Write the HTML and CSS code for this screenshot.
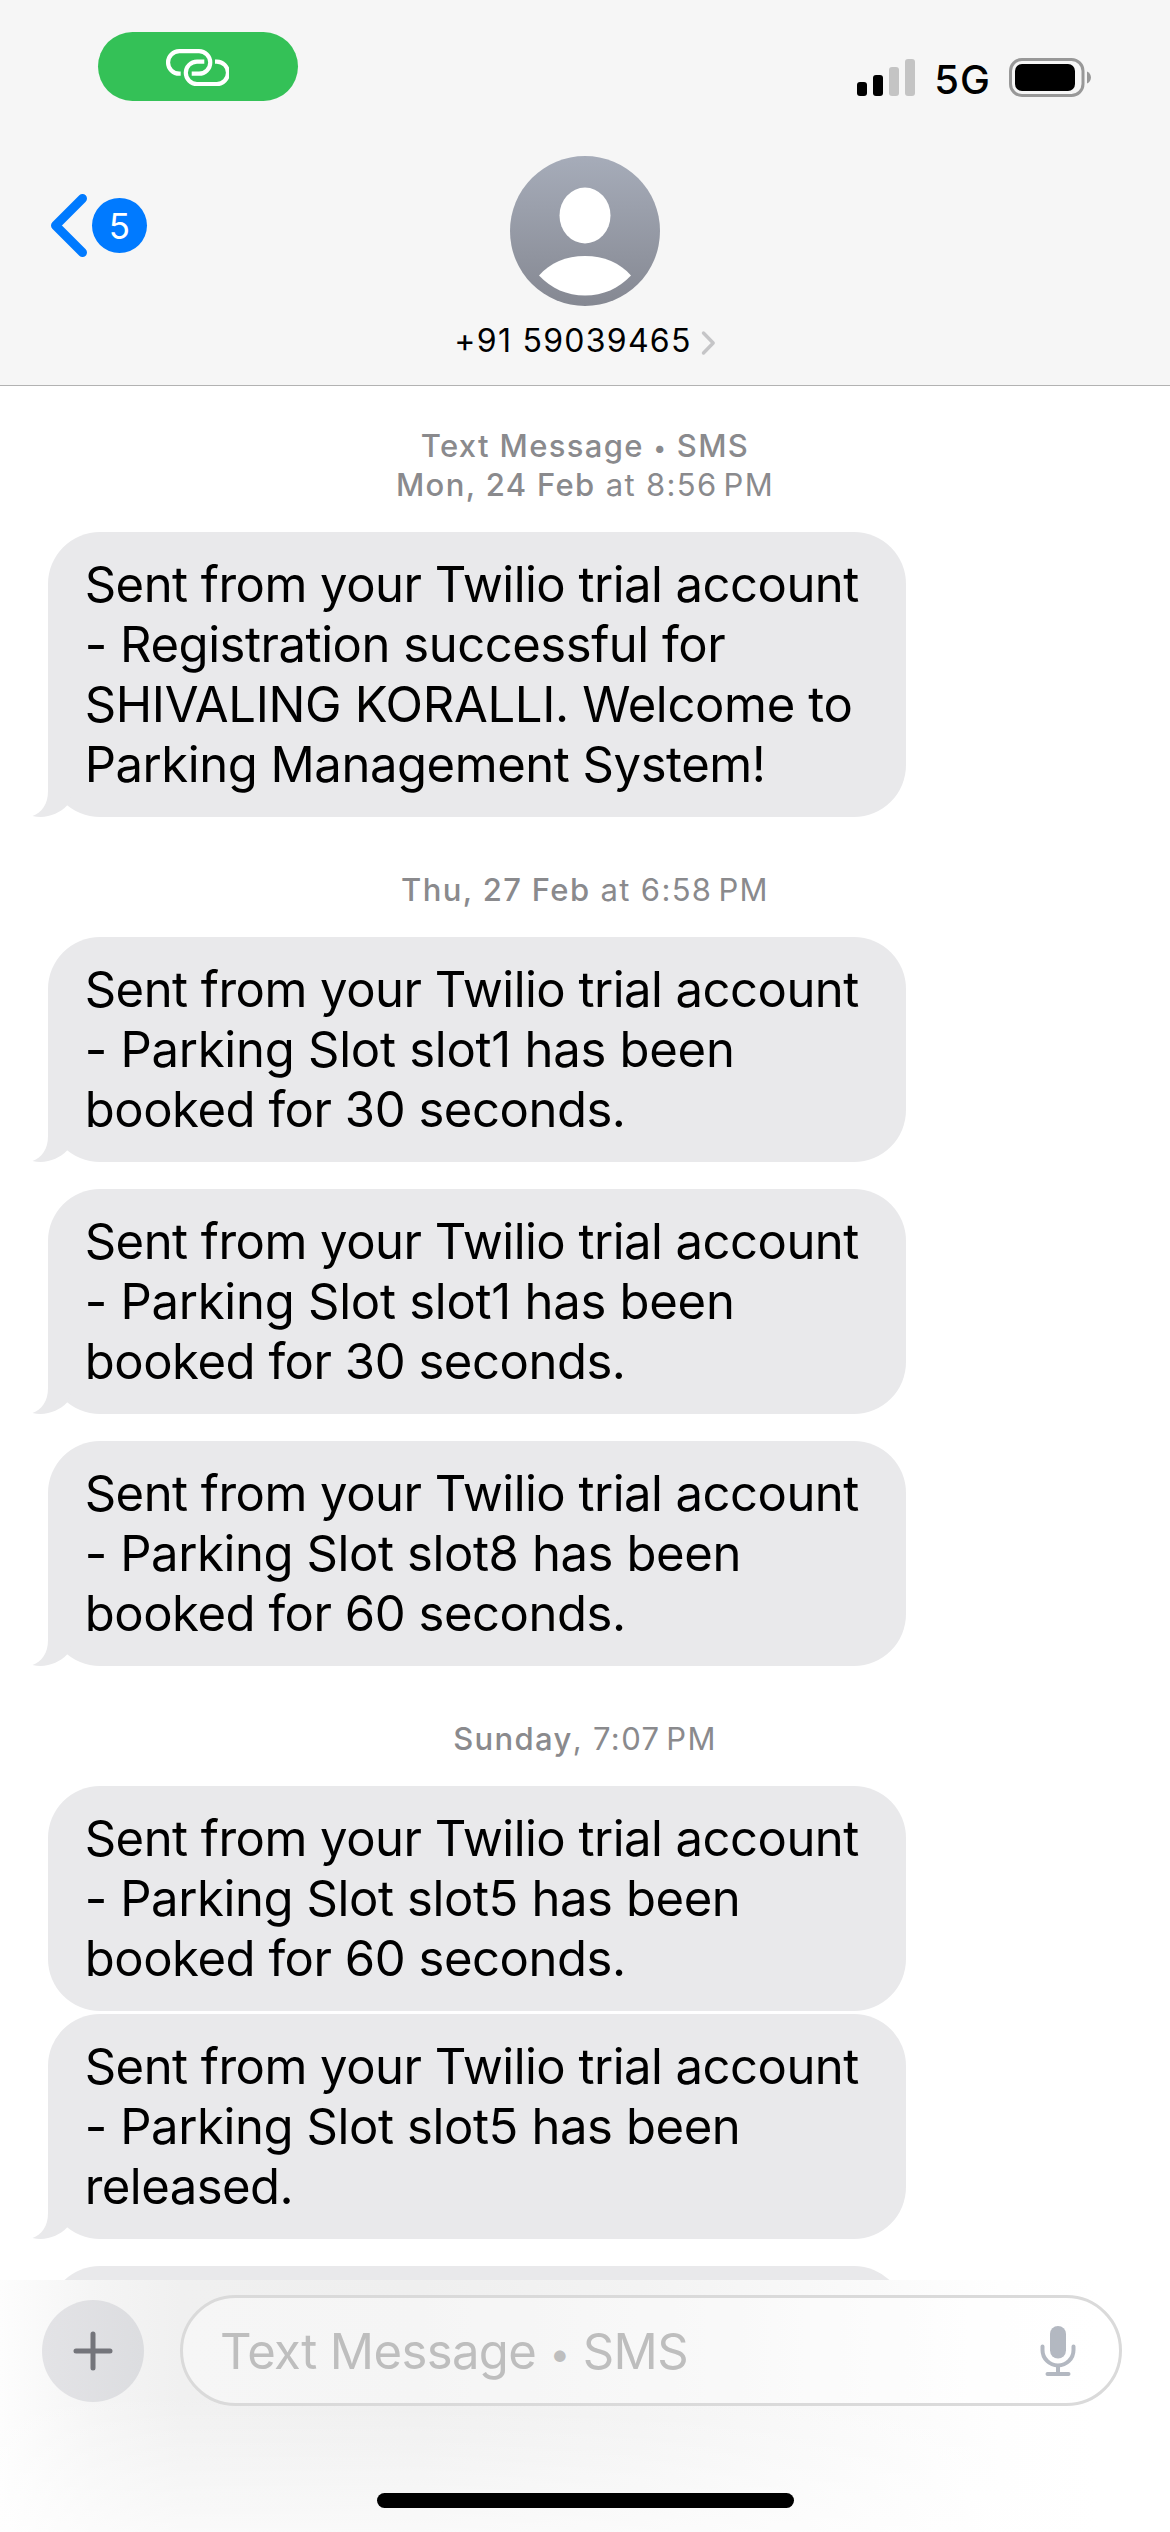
FILE: index.html
```html
<!DOCTYPE html>
<html lang="en">
<head>
<meta charset="utf-8">
<title>Messages</title>
<link rel="stylesheet" href="styles.css">
</head>
<body>
<div class="phone">
  <header class="header">
    <div class="status">
      <div class="pill">
        <svg width="64" height="40" viewBox="165 48 64 40" fill="none" stroke="#fff" stroke-width="4.2">
          <path d="M180.7 73.7H179.3A11.25 11.25 0 0 1 179.3 51.2H199A11.25 11.25 0 0 1 199 73.7H191.7"/>
          <path d="M204.3 61.6H197A11.2 11.2 0 0 0 197 84H216.8A11.2 11.2 0 0 0 216.8 61.6H215"/>
        </svg>
      </div>
      <div class="indicators">
        <svg class="signal" width="58" height="38" viewBox="0 0 58 38">
          <rect x="0" y="24" width="10" height="14" rx="3"/>
          <rect x="16" y="17" width="10" height="21" rx="3"/>
          <rect x="32" y="9" width="10" height="29" rx="3" fill="#c4c4c4"/>
          <rect x="48" y="1" width="10" height="37" rx="3" fill="#c4c4c4"/>
        </svg>
        <span class="network">5G</span>
        <svg class="battery" width="82" height="39" viewBox="0 0 82 39">
          <rect x="1.5" y="1.5" width="72.5" height="36" rx="11.5" fill="none" stroke="#989898" stroke-width="3"/>
          <rect x="6" y="6" width="60" height="27" rx="7"/>
          <path d="M78 13.5C83.3 15.5 83.3 23.5 78 25.5Z" fill="#989898"/>
        </svg>
      </div>
    </div>
    <nav class="nav">
      <div class="back">
        <svg width="38" height="65" viewBox="0 0 38 65" fill="none" stroke="#007aff" stroke-width="9" stroke-linecap="round" stroke-linejoin="round">
          <path d="M32.5 5.5L5.5 32.5L32.5 59.5"/>
        </svg>
        <span class="badge">5</span>
      </div>
      <div class="contact">
        <svg width="150" height="150" viewBox="0 0 150 150">
          <defs>
            <linearGradient id="av" x1="0" y1="0" x2="0" y2="1">
              <stop offset="0" stop-color="#a6acb9"/>
              <stop offset="1" stop-color="#858892"/>
            </linearGradient>
          </defs>
          <circle cx="75" cy="75" r="75" fill="url(#av)"/>
          <ellipse cx="75" cy="59.5" rx="25.5" ry="28" fill="#fff"/>
          <path d="M29 119.5C40 107 56 100 75 100S110 107 121 119.5C109 132.5 93 139.5 75 139.5S41 132.5 29 119.5Z" fill="#fff"/>
        </svg>
        <div class="name">
          <span>+91 59039465</span>
          <svg width="15" height="26" viewBox="0 0 15 26" fill="none" stroke="#c5c5c7" stroke-width="3.4" stroke-linecap="round" stroke-linejoin="round">
            <path d="M2.5 3L12.2 13L2.5 23"/>
          </svg>
        </div>
      </div>
    </nav>
  </header>

  <main class="thread">
    <div class="stamp first"><b>Text Message <i class="dot">•</i> SMS</b><br><b>Mon, 24 Feb</b> at 8:56<span class="pm">PM</span></div>
    <div class="bubble">
      <p class="tight">Sent from your Twilio trial account</p>
      <p>- Registration successful for</p>
      <p class="caps">SHIVALING KORALLI. Welcome to</p>
      <p>Parking Management System!</p>
      <svg class="tail" viewBox="0 -20 50 60"><path d="M16 -20V14C16 27 10 35.5 .5 39C14 42 27 37 35 28.5L42 12V-20Z"/></svg>
    </div>

    <div class="stamp"><b>Thu, 27 Feb</b> at 6:58<span class="pm">PM</span></div>
    <div class="bubble">
      <p class="tight">Sent from your Twilio trial account</p>
      <p class="wide">- Parking Slot slot1 has been</p>
      <p>booked for 30 seconds.</p>
      <svg class="tail" viewBox="0 -20 50 60"><path d="M16 -20V14C16 27 10 35.5 .5 39C14 42 27 37 35 28.5L42 12V-20Z"/></svg>
    </div>
    <div class="bubble spaced">
      <p class="tight">Sent from your Twilio trial account</p>
      <p class="wide">- Parking Slot slot1 has been</p>
      <p>booked for 30 seconds.</p>
      <svg class="tail" viewBox="0 -20 50 60"><path d="M16 -20V14C16 27 10 35.5 .5 39C14 42 27 37 35 28.5L42 12V-20Z"/></svg>
    </div>
    <div class="bubble spaced">
      <p class="tight">Sent from your Twilio trial account</p>
      <p class="slot">- Parking Slot slot8 has been</p>
      <p>booked for 60 seconds.</p>
      <svg class="tail" viewBox="0 -20 50 60"><path d="M16 -20V14C16 27 10 35.5 .5 39C14 42 27 37 35 28.5L42 12V-20Z"/></svg>
    </div>

    <div class="stamp"><b>Sunday</b>, 7:07<span class="pm">PM</span></div>
    <div class="bubble">
      <p class="tight">Sent from your Twilio trial account</p>
      <p class="slot">- Parking Slot slot5 has been</p>
      <p>booked for 60 seconds.</p>
    </div>
    <div class="bubble grouped">
      <p class="tight">Sent from your Twilio trial account</p>
      <p class="slot">- Parking Slot slot5 has been</p>
      <p class="tight">released.</p>
      <svg class="tail" viewBox="0 -20 50 60"><path d="M16 -20V14C16 27 10 35.5 .5 39C14 42 27 37 35 28.5L42 12V-20Z"/></svg>
    </div>
    <div class="bubble spaced next"></div>
  </main>

  <footer class="composer">
    <div class="row">
      <div class="plus">
        <svg width="40" height="40" viewBox="0 0 40 40" stroke="#74757b" stroke-width="5" stroke-linecap="round">
          <path d="M3 20H37M20 3V37"/>
        </svg>
      </div>
      <div class="field">
        <span class="placeholder">Text Message <i class="dot">•</i> SMS</span>
        <svg width="36" height="52" viewBox="0 0 36 52" fill="none" stroke="#b3b8c1" stroke-width="4" stroke-linecap="round">
          <rect x="10" y="1" width="16" height="32.5" rx="8" fill="#b3b8c1" stroke="none"/>
          <path d="M2.5 21.5V25A15.5 15.5 0 0 0 33.5 25V21.5M18 41V48M7.5 49H28.5"/>
        </svg>
      </div>
    </div>
    <div class="home"></div>
  </footer>
</div>
</body>
</html>
```
FILE: styles.css
```css
* {
  box-sizing: border-box;
}

body {
  margin: 0;
  background: #fff;
  color: #000;
  font-family: Inter, "Liberation Sans", sans-serif;
}

svg {
  display: block;
  flex: none;
}

.phone {
  display: flex;
  flex-direction: column;
  width: 1170px;
  height: 2532px;
  overflow: hidden;
}

/* Header */
.header {
  height: 386px;
  flex: none;
  background: #f6f6f6;
  border-bottom: 1px solid #b2b2b2;
}

.status {
  display: flex;
  justify-content: space-between;
  align-items: flex-start;
  height: 156px;
  padding: 32px 79px 0 98px;
}

.pill {
  display: flex;
  align-items: center;
  justify-content: center;
  width: 200px;
  height: 69px;
  padding-top: 2px;
  padding-right: 2px;
  border-radius: 35px;
  background: #34c157;
}

.indicators {
  display: flex;
  align-items: flex-start;
  padding-top: 26px;
}

.network {
  margin: 0 18px 0 19px;
  font-size: 40px;
  font-weight: 500;
  line-height: 43px;
  letter-spacing: 1px;
}

.nav {
  display: grid;
  grid-template-columns: 1fr auto 1fr;
}

.back {
  display: flex;
  align-items: center;
  gap: 4px;
  height: 65px;
  margin-top: 37px;
  padding-left: 50px;
}

.badge {
  width: 55px;
  height: 55px;
  border-radius: 50%;
  background: #007aff;
  color: #fff;
  font-size: 35px;
  line-height: 56px;
  text-align: center;
}

.contact {
  display: flex;
  flex-direction: column;
  align-items: center;
}

.name {
  display: flex;
  align-items: center;
  gap: 9px;
  margin-top: 15px;
  font-size: 32px;
  line-height: 40px;
  letter-spacing: 1.27px;
}

.name svg {
  margin-top: 3px;
}

/* Conversation */
.thread {
  flex: 1;
  min-height: 0;
  overflow: hidden;
  padding-top: 40px;
}

.stamp {
  margin: 53px 0 28px;
  color: #8a8a8d;
  font-size: 31px;
  line-height: 39px;
  letter-spacing: 1.35px;
  text-align: center;
}

.stamp.first {
  margin-top: 0;
}

.stamp b {
  font-weight: 500;
}

.pm {
  margin-left: 6px;
}

.dot {
  font-size: 0.75em;
  font-style: normal;
  line-height: 0;
  vertical-align: 0.06em;
}

.bubble {
  position: relative;
  width: 858px;
  margin-left: 48px;
  padding: 23px 0 22px 36.7px;
  border-radius: 52px;
  background: #e9e9eb;
  font-size: 49px;
  line-height: 60px;
  letter-spacing: -0.46px;
  white-space: nowrap;
}

.bubble p {
  margin: 0;
}

.bubble .tight {
  letter-spacing: -0.52px;
}

.bubble .caps {
  letter-spacing: -0.34px;
}

.bubble .wide {
  letter-spacing: -0.26px;
}

.bubble .slot {
  letter-spacing: -0.4px;
}

.spaced {
  margin-top: 27px;
}

.grouped {
  margin-top: 3px;
}

.next {
  height: 225px;
}

.tail {
  position: absolute;
  left: -16px;
  bottom: 0;
  width: 50px;
  height: 60px;
  fill: #e9e9eb;
}

/* Composer */
.composer {
  display: flex;
  flex-direction: column;
  align-items: center;
  height: 252px;
  flex: none;
  background:
    linear-gradient(to bottom, rgba(255, 255, 255, 0) 45%, rgba(255, 255, 255, 0.65) 100%),
    linear-gradient(to right, #fdfdfd 0, #f5f5f5 90px, #f0f0f0 180px, #efefef 420px, #f3f3f3 640px, #f9f9f9 840px, #fefefe 1000px, #fff 1100px);
}

.row {
  display: flex;
  align-items: center;
  align-self: stretch;
  gap: 36px;
  padding: 15px 48px 0 42px;
}

.plus {
  display: flex;
  align-items: center;
  justify-content: center;
  width: 102px;
  height: 102px;
  border-radius: 50%;
  background: linear-gradient(to right, #e3e3e6, #dcdde0);
}

.field {
  display: flex;
  align-items: center;
  justify-content: space-between;
  flex: 1;
  height: 111px;
  padding: 0 43px 0 37px;
  border: 3px solid #dadada;
  border-radius: 56px;
  background: rgba(255, 255, 255, 0.4);
}

.placeholder {
  padding-top: 2px;
  color: #bebebe;
  font-size: 49px;
  line-height: 60px;
  letter-spacing: -0.6px;
}

.home {
  width: 417px;
  height: 15px;
  margin-top: 87px;
  border-radius: 8px;
  background: #000;
}
```
